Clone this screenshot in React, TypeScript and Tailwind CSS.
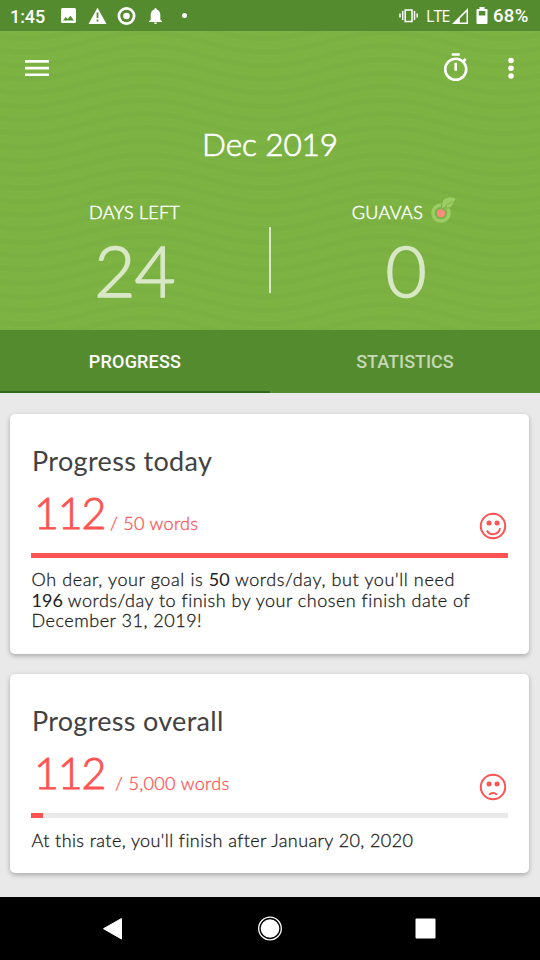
import React from "react";

const WAVES = Array.from({ length: 26 }, (_, i) => i * 13.6 - 16);

function WaveBackground() {
  return (
    <svg className="absolute inset-0" width="540" height="299" viewBox="0 0 540 299" fill="none" aria-hidden="true">
      {WAVES.map((y) => (
        <path
          key={y}
          d={`M-95 ${y - 10} C-50 ${y - 10} -20 ${y + 10} 25 ${y + 10} S100 ${y - 10} 145 ${y - 10} S220 ${y + 10} 265 ${y + 10} S340 ${y - 10} 385 ${y - 10} S460 ${y + 10} 505 ${y + 10} S580 ${y - 10} 625 ${y - 10}`}
          stroke="#7ab041"
          strokeWidth="5"
        />
      ))}
    </svg>
  );
}

function StatusBar() {
  return (
    <div className="flex h-[31px] items-center bg-[#558b2f] font-['Open_Sans',sans-serif] text-white">
      <span className="ml-[10px] w-[50px] pt-[2px] font-[Roboto,sans-serif] text-[18px] font-medium leading-none tracking-[-0.1px]">1:45</span>
      <svg width="130" height="31" viewBox="60 0 130 31" fill="#fff" aria-hidden="true">
        <path fillRule="evenodd" d="M62.500 8h12q1.500 0 1.500 1.500v12q0 1.500-1.500 1.500h-12q-1.500 0-1.500-1.500v-12q0-1.500 1.500-1.500ZM63 20.500h11l-3.600-4.800-2.700 3.400-1.900-2.200Z" />
        <path fillRule="evenodd" d="M97.500 7.800 106.500 24h-18ZM96.600 12.500v5.500h1.800v-5.500ZM96.600 19.500v1.900h1.800v-1.900Z" />
        <circle cx="126.500" cy="16" r="7.600" fill="none" stroke="#fff" strokeWidth="2.800" />
        <circle cx="126.500" cy="16" r="3.300" />
        <path d="M155.500 8q1.200 0 1.200 1.500 3.600 1 3.600 5.500v4.700l1.700 1.500v.8h-13v-.8l1.700-1.500V15q0-4.500 3.600-5.500 0-1.500 1.200-1.500ZM154 22.500h3q0 1.500-1.500 1.500t-1.500-1.500Z" />
        <circle cx="184.500" cy="15.500" r="2.500" />
      </svg>
      <svg className="ml-auto" width="20" height="31" viewBox="398 0 20 31" fill="none" stroke="#fff" aria-hidden="true">
        <rect x="405.200" y="10" width="6.800" height="11.500" strokeWidth="1.500" />
        <path d="M402.700 11v9M414.500 11v9M400 13.500v4M417.200 13.500v4" strokeWidth="1.500" />
      </svg>
      <span className="ml-[8px] w-[26px] text-[16px] leading-none tracking-[-0.8px]">LTE</span>
      <svg width="37" height="31" viewBox="452 0 37 31" fill="#fff" aria-hidden="true">
        <path fillRule="evenodd" d="M468 8v16h-16ZM466.500 11.800 459.800 18.600V22.500h6.700Z" />
        <path d="M479.500 7h5v2h2q1 0 1 1v13q0 1-1 1h-9q-1 0-1-1V10q0-1 1-1h2Z" />
        <path fill="#558b2f" d="M478.800 11h6.500v4.500h-6.500Z" />
      </svg>
      <span className="ml-[4px] w-[47px] pt-[2px] font-[Roboto,sans-serif] text-[18.500px] font-medium leading-none tracking-[0.3px]">68%</span>
    </div>
  );
}

function Header() {
  return (
    <header className="relative h-[299px] overflow-hidden bg-[#7cb342] font-[Lato,sans-serif] text-white">
      <WaveBackground />
      <div className="relative flex h-full flex-col">
        <div className="flex h-[74px] items-center">
          <svg className="ml-[25px]" width="24" height="18" viewBox="0 0 24 18" fill="#fff" aria-label="Menu">
            <path d="M0 1h24v2.700H0zM0 7.700h24v2.700H0zM0 14.400h24v2.700H0z" />
          </svg>
          <svg className="ml-auto" width="28" height="32" viewBox="442 52 28 32" fill="none" stroke="#fff" aria-label="Timer">
            <circle cx="455.700" cy="69.300" r="10.500" strokeWidth="2.600" />
            <path d="M451.700 54.500h8M455.700 62.700v8M463.200 61.500l2.500-2.500" strokeWidth="2.600" />
          </svg>
          <svg className="ml-[34px] mr-[22px]" width="14" height="24" viewBox="504 56 14 24" fill="#fff" aria-label="More">
            <circle cx="511" cy="60.500" r="2.800" />
            <circle cx="511" cy="68.200" r="2.800" />
            <circle cx="511" cy="76" r="2.800" />
          </svg>
        </div>
        <h1 className="mt-[19px] h-[40px] text-center text-[31.500px] font-light leading-[40px] tracking-[-0.1px] [-webkit-text-stroke:0.7px_#fff]">Dec 2019</h1>
        <div className="mt-[35px] flex">
          <section className="w-[269px]">
            <div className="flex h-[26px] items-center justify-center text-[18px] font-light tracking-[0.2px] [-webkit-text-stroke:0.5px_#fff]">DAYS LEFT</div>
            <div className="mt-[5px] text-center text-[71px] font-light leading-[80px] tracking-[-1px] text-[#d8e8c6] [-webkit-text-stroke:1.5px_#d8e8c6]">24</div>
          </section>
          <div className="mt-[28px] h-[66px] w-[2px] bg-[#d8e8c6]" />
          <section className="w-[269px]">
            <div className="flex h-[26px] items-center justify-center text-[18px] font-light tracking-[0.4px] [-webkit-text-stroke:0.5px_#fff]">
              GUAVAS
              <svg className="mb-[4px] ml-[7px] mr-[2px]" width="27" height="28" viewBox="430 196 27 28" fill="none" aria-hidden="true">
                <circle cx="441" cy="213" r="8" stroke="#9ccc65" strokeWidth="3.600" />
                <path d="M441.500 208.500q-1-11 8-11.700 4 0 7.500 2-2.500 1-3.500 4.500-2.500 6-8.500 4.500Z" fill="#9ccc65" stroke="#7cb342" strokeWidth="1" />
                <path d="M443.500 209q3-5.500 9-7.500" stroke="#7cb342" strokeWidth="1" />
                <circle cx="441" cy="213.300" r="4" fill="#ff8a80" />
              </svg>
            </div>
            <div className="mt-[5px] text-center text-[71px] font-light leading-[80px] tracking-[-1px] text-[#d8e8c6] [-webkit-text-stroke:1.5px_#d8e8c6]">0</div>
          </section>
        </div>
      </div>
    </header>
  );
}

function Tabs() {
  return (
    <nav className="flex h-[63px] bg-[#558b2f] font-[Roboto,sans-serif] text-[18px] font-medium">
      <div className="flex w-1/2 items-center justify-center border-b-2 border-[#33691e] pt-[2px] tracking-[0.2px] text-white">PROGRESS</div>
      <div className="flex w-1/2 items-center justify-center text-[#c5d8b6]">STATISTICS</div>
    </nav>
  );
}

function Face({ happy }: { happy: boolean }) {
  return (
    <svg className="ml-auto mr-px" width="28" height="28" viewBox="0 0 28 28" fill="none" stroke="#ff5252" aria-hidden="true">
      <circle cx="14" cy="14" r="12.200" strokeWidth="2" />
      <circle cx="10" cy="11" r="2.500" fill="#ff5252" stroke="none" />
      <circle cx="18" cy="11" r="2.500" fill="#ff5252" stroke="none" />
      {happy ? (
        <path d="M8 18.500C10.500 24 20 23.500 21 16.200" strokeWidth="1.900" />
      ) : (
        <path d="M10.500 22Q11 20 14 20T17.700 22" strokeWidth="1.900" />
      )}
    </svg>
  );
}

export default function App() {
  return (
    <div className="flex h-[960px] w-[540px] flex-col overflow-hidden bg-[#e9e9e9]">
      <StatusBar />
      <Header />
      <Tabs />
      <main className="h-[504px] pl-[10px] pr-[11px] pt-[21px] font-[Lato,sans-serif] text-[#212121]">
        <article className="h-[240px] rounded-[5px] bg-white px-[21px] shadow-[0_2px_5px_rgba(0,0,0,0.28)]">
          <h2 className="pl-px pt-[30px] text-[27px] leading-[34px] tracking-[0.35px] text-[#424242]">Progress today</h2>
          <div className="flex h-[75px] text-[#ff5252]">
            <span className="mt-[8px] w-[79px] pl-[3px] text-[43px] font-light leading-[54px] tracking-[-1.2px] [-webkit-text-stroke:0.9px_#ff5252]">112</span>
            <span className="mt-[33px] text-[18px] font-light leading-[24px] tracking-[0.3px] [-webkit-text-stroke:0.3px_#ff5252]">/ 50 words</span>
            <span className="ml-auto mt-[34px]"><Face happy /></span>
          </div>
          <div className="h-[5px] bg-[#ff5252]" />
          <p className="mt-[11px] whitespace-nowrap pl-[0.5px] text-[18px] font-light leading-[20.500px] [-webkit-text-stroke:0.3px_#212121]">
            <span className="tracking-[0.62px]">Oh dear, your goal is <b className="tracking-normal [-webkit-text-stroke:0]">50</b> words/day, but you'll need</span><br />
            <span className="tracking-[0.5px]"><b className="tracking-normal [-webkit-text-stroke:0]">196</b> words/day to finish by your chosen finish date of</span><br />
            <span className="tracking-[0.52px]">December 31, 2019!</span>
          </p>
        </article>
        <article className="mt-[20px] h-[199px] rounded-[5px] bg-white px-[21px] shadow-[0_2px_5px_rgba(0,0,0,0.28)]">
          <h2 className="pl-px pt-[30px] text-[27px] leading-[34px] tracking-[0.3px] text-[#424242]">Progress overall</h2>
          <div className="flex h-[75px] text-[#ff5252]">
            <span className="mt-[8px] w-[84px] pl-[3px] text-[43px] font-light leading-[54px] tracking-[-1.2px] [-webkit-text-stroke:0.9px_#ff5252]">112</span>
            <span className="mt-[33px] text-[18px] font-light leading-[24px] tracking-[0.35px] [-webkit-text-stroke:0.3px_#ff5252]">/ 5,000 words</span>
            <span className="ml-auto mt-[35px]"><Face happy={false} /></span>
          </div>
          <div className="h-[5px] bg-[#e9e9e9]"><div className="h-full w-[12px] bg-[#ff5252]" /></div>
          <p className="mt-[12px] whitespace-nowrap pl-[0.5px] text-[18px] font-light leading-[20.500px] tracking-[0.41px] [-webkit-text-stroke:0.3px_#212121]">At this rate, you'll finish after January 20, 2020</p>
        </article>
      </main>
      <footer className="h-[63px] bg-black">
        <svg width="540" height="63" viewBox="0 897 540 63" fill="#fff" aria-hidden="true">
          <path d="M121.500 918.500v20.500L103.500 928.700Z" stroke="#fff" strokeLinejoin="round" />
          <circle cx="270" cy="928.500" r="11.300" fill="none" stroke="#fff" strokeWidth="1.300" />
          <circle cx="270" cy="928.500" r="9.300" />
          <rect x="415.500" y="918.500" width="20" height="20" rx="1" />
        </svg>
      </footer>
    </div>
  );
}
